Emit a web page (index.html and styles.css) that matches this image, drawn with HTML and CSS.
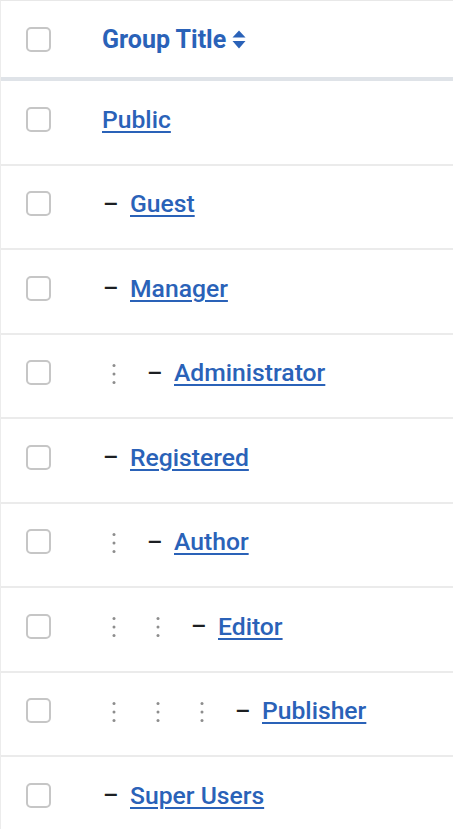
FILE: index.html
```html
<!DOCTYPE html>
<html lang="en">
<head>
<meta charset="utf-8">
<title>Groups</title>
<link rel="stylesheet" href="styles.css">
</head>
<body>
<div class="table">
  <div class="row head">
    <div class="cell check"><span class="box"></span></div>
    <div class="cell title">
      <a class="sort" href="#">Group Title</a>
      <svg class="sort-icon" width="14" height="19" viewBox="0 0 14 19"><path d="M7 0.5 L13.5 7.5 L0.5 7.5 Z" fill="#2a62b8"/><path d="M7 18.5 L13.5 11 L0.5 11 Z" fill="#2a62b8"/></svg>
    </div>
  </div>

  <div class="row">
    <div class="cell check"><span class="box"></span></div>
    <div class="cell title"><a href="#">Public</a></div>
  </div>

  <div class="row">
    <div class="cell check"><span class="box"></span></div>
    <div class="cell title"><span class="dash">–</span><a href="#">Guest</a></div>
  </div>

  <div class="row">
    <div class="cell check"><span class="box"></span></div>
    <div class="cell title"><span class="dash">–</span><a href="#">Manager</a></div>
  </div>

  <div class="row">
    <div class="cell check"><span class="box"></span></div>
    <div class="cell title"><span class="vdots"><svg width="4" height="22" viewBox="0 0 4 22"><circle cx="2" cy="2.5" r="1.5"/><circle cx="2" cy="11" r="1.5"/><circle cx="2" cy="19.5" r="1.5"/></svg></span><span class="dash">–</span><a href="#">Administrator</a></div>
  </div>

  <div class="row">
    <div class="cell check"><span class="box"></span></div>
    <div class="cell title"><span class="dash">–</span><a href="#">Registered</a></div>
  </div>

  <div class="row">
    <div class="cell check"><span class="box"></span></div>
    <div class="cell title"><span class="vdots"><svg width="4" height="22" viewBox="0 0 4 22"><circle cx="2" cy="2.5" r="1.5"/><circle cx="2" cy="11" r="1.5"/><circle cx="2" cy="19.5" r="1.5"/></svg></span><span class="dash">–</span><a href="#">Author</a></div>
  </div>

  <div class="row">
    <div class="cell check"><span class="box"></span></div>
    <div class="cell title"><span class="vdots"><svg width="4" height="22" viewBox="0 0 4 22"><circle cx="2" cy="2.5" r="1.5"/><circle cx="2" cy="11" r="1.5"/><circle cx="2" cy="19.5" r="1.5"/></svg></span><span class="vdots"><svg width="4" height="22" viewBox="0 0 4 22"><circle cx="2" cy="2.5" r="1.5"/><circle cx="2" cy="11" r="1.5"/><circle cx="2" cy="19.5" r="1.5"/></svg></span><span class="dash">–</span><a href="#">Editor</a></div>
  </div>

  <div class="row">
    <div class="cell check"><span class="box"></span></div>
    <div class="cell title"><span class="vdots"><svg width="4" height="22" viewBox="0 0 4 22"><circle cx="2" cy="2.5" r="1.5"/><circle cx="2" cy="11" r="1.5"/><circle cx="2" cy="19.5" r="1.5"/></svg></span><span class="vdots"><svg width="4" height="22" viewBox="0 0 4 22"><circle cx="2" cy="2.5" r="1.5"/><circle cx="2" cy="11" r="1.5"/><circle cx="2" cy="19.5" r="1.5"/></svg></span><span class="vdots"><svg width="4" height="22" viewBox="0 0 4 22"><circle cx="2" cy="2.5" r="1.5"/><circle cx="2" cy="11" r="1.5"/><circle cx="2" cy="19.5" r="1.5"/></svg></span><span class="dash">–</span><a href="#">Publisher</a></div>
  </div>

  <div class="row">
    <div class="cell check"><span class="box"></span></div>
    <div class="cell title"><span class="dash">–</span><a href="#">Super Users</a></div>
  </div>
</div>
</body>
</html>
```

FILE: styles.css
```css
html, body {
  margin: 0;
  padding: 0;
  background: #ffffff;
}

body {
  font-family: Roboto, "Liberation Sans", sans-serif;
  font-size: 24.7px;
  color: #22262a;
  overflow: hidden;
}

.table {
  width: 453px;
  border-top: 1px solid #e8e8e8;
  border-left: 1px solid #ececec;
  box-sizing: border-box;
}

.row {
  display: flex;
  align-items: center;
  height: 84.5px;
  box-sizing: border-box;
  padding-bottom: 6px;
  border-bottom: 2px solid #ebebeb;
}

.row.head {
  height: 80px;
  padding-bottom: 0;
  border-bottom: 4px solid #dfe3e8;
}

.cell.check {
  width: 101px;
  padding-left: 25px;
  box-sizing: border-box;
  display: flex;
  align-items: center;
  flex: none;
}

.box {
  display: block;
  width: 25px;
  height: 25px;
  box-sizing: border-box;
  border: 2px solid #c6c6c6;
  border-radius: 5px;
  background: #fff;
}

.cell.title {
  display: flex;
  align-items: center;
}

a {
  color: #2a62b8;
  font-weight: 500;
  text-decoration: underline;
  text-decoration-thickness: 2px;
  text-underline-offset: 3px;
}

a.sort {
  font-weight: 700;
  font-size: 25px;
  text-decoration: none;
}

.sort-icon {
  margin-left: 6px;
  margin-top: 1px;
}

.dash {
  width: 28px;
  flex: none;
  font-weight: 500;
  font-size: 24px;
  color: #1c1f22;
  padding-left: 1px;
  box-sizing: border-box;
}

.vdots {
  width: 44px;
  flex: none;
  display: flex;
  align-items: center;
  padding-left: 10px;
  box-sizing: border-box;
}

.vdots svg {
  fill: #8d8d8d;
  margin-top: 2px;
}
```
